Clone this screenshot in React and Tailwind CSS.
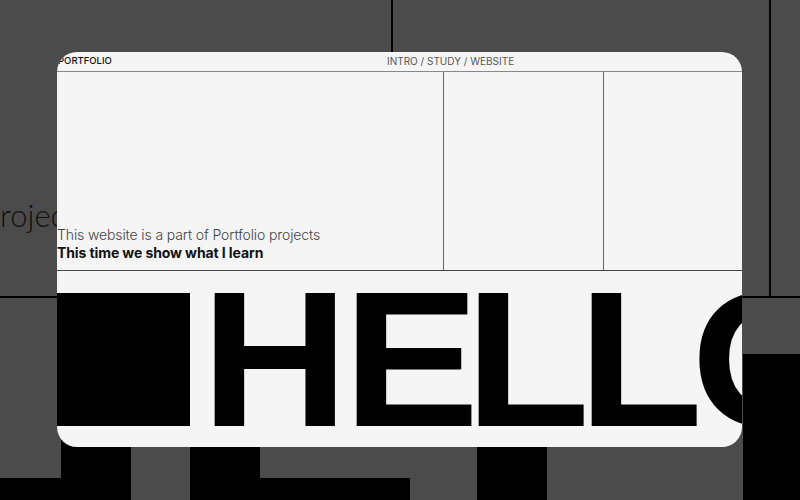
const letters = [
  { ch: "H", w: "w-[142px]" },
  { ch: "E", w: "w-[122px]" },
  { ch: "L", w: "w-[113px]" },
  { ch: "L", w: "w-[113px]" },
  { ch: "O", w: "w-[140px]" },
];

export default function App() {
  return (
    <div className="relative w-[800px] h-[500px] overflow-hidden bg-[#4b4b4b] font-['Inter',sans-serif]">
      {/* zoomed-out backdrop */}
      <div className="absolute left-[391px] top-0 w-[2px] h-[52px] bg-black" />
      <div className="absolute left-[769px] top-0 w-[2px] h-[298px] bg-black" />
      <div className="absolute left-0 top-[296px] w-[57px] h-[2px] bg-black" />
      <div className="absolute left-[742px] top-[296px] w-[58px] h-[2px] bg-black" />
      <span className="absolute left-[-17px] top-[197px] text-[31px] leading-[36px] font-light text-[#111] font-['Lato',sans-serif]">
        projects
      </span>
      <div className="absolute left-0 top-[478px] w-[61px] h-[22px] bg-black" />
      <div className="absolute left-[61px] top-[440px] w-[70px] h-[60px] bg-black" />
      <div className="absolute left-[190px] top-[440px] w-[70px] h-[60px] bg-black" />
      <div className="absolute left-[260px] top-[478px] w-[150px] h-[22px] bg-black" />
      <div className="absolute left-[477px] top-[440px] w-[70px] h-[60px] bg-black" />
      <div className="absolute left-[743px] top-[354px] w-[57px] h-[146px] bg-black" />

      <div className="relative pt-[52px] pl-[57px]">
        <div className="w-[685px] h-[395px] rounded-[20px] bg-[#f5f5f5] overflow-hidden flex flex-col">
          <header className="h-[20px] shrink-0 border-b border-[#888] flex items-center">
            <span className="w-[330px] pl-[1px] text-[9.5px] font-medium text-[#111]">PORTFOLIO</span>
            <span className="text-[10px] text-[#555]">INTRO / STUDY / WEBSITE</span>
          </header>
          <div className="h-[199px] shrink-0 border-b border-[#444] grid grid-cols-[387px_160px_1fr]">
            <div className="border-r border-[#666] flex flex-col justify-end pb-[8px]">
              <p className="text-[14px] leading-[18px] font-light text-[#444] tracking-[-0.12px]">
                This website is a part of Portfolio projects
              </p>
              <p className="text-[14px] leading-[18px] font-bold text-[#111] tracking-[-0.1px]">
                This time we show what I learn
              </p>
            </div>
            <div className="border-r border-[#666]" />
            <div />
          </div>
          <div className="flex items-start pt-[22px]">
            <div className="w-[133px] h-[133px] shrink-0 bg-black" />
            <div className="ml-[11px] mt-[-1px] flex font-['Liberation_Sans',sans-serif] text-[193px] leading-[134px] font-bold text-black whitespace-nowrap">
              {letters.map((l, i) => (
                <span key={i} className={`${l.w} shrink-0 inline-block origin-left scale-x-[1.06]`}>
                  {l.ch}
                </span>
              ))}
            </div>
          </div>
        </div>
      </div>
    </div>
  );
}
